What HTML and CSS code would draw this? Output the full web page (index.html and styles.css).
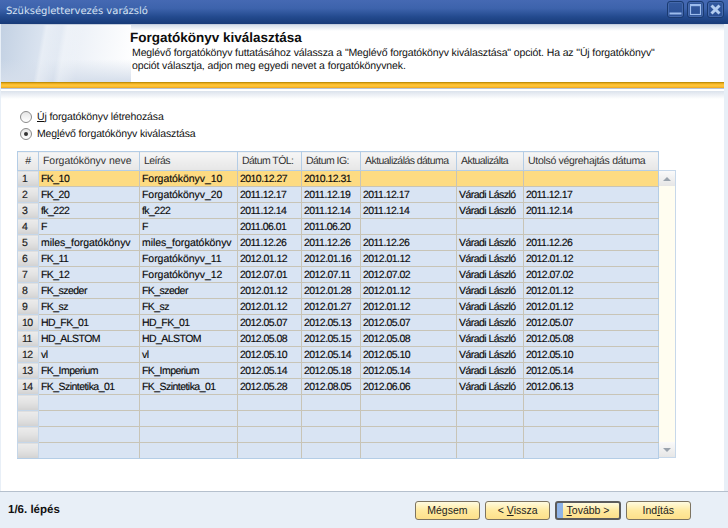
FILE: index.html
```html
<!DOCTYPE html>
<html lang="hu">
<head>
<meta charset="utf-8">
<title>Szükséglettervezés varázsló</title>
<link rel="stylesheet" href="styles.css">
</head>
<body>
<div class="window">
  <header class="titlebar">
    <span class="title">Szükséglettervezés varázsló</span>
    <div class="winbtns">
      <span class="winbtn"><svg width="15" height="15" viewBox="0 0 15 15"><rect x="1.5" y="10.5" width="12" height="2" fill="#9dbcec"/></svg></span>
      <span class="winbtn"><svg width="15" height="15" viewBox="0 0 15 15"><rect x="2.5" y="3" width="10" height="9.5" fill="none" stroke="#9dbcec" stroke-width="1.2"/><rect x="2" y="2" width="11" height="2.2" fill="#9dbcec"/></svg></span>
      <span class="winbtn"><svg width="15" height="15" viewBox="0 0 15 15"><path d="M3.5 3.5l8 8M11.5 3.5l-8 8" stroke="#b4cdf0" stroke-width="3"/></svg></span>
    </div>
  </header>
  <div class="shell">
    <div class="body">
      <section class="banner">
        <h1>Forgatókönyv kiválasztása</h1>
        <p>Meglévő forgatókönyv futtatásához válassza a "Meglévő forgatókönyv kiválasztása" opciót. Ha az "Új forgatókönyv"<br>opciót választja, adjon meg egyedi nevet a forgatókönyvnek.</p>
      </section>
      <div class="goldline"></div>
      <div class="shade"></div>
      <div class="options">
        <label class="opt"><span class="radio"></span><span><u>Ú</u>j forgatókönyv létrehozása</span></label>
        <label class="opt"><span class="radio on"></span><span>Meg<u>l</u>évő forgatókönyv kiválasztása</span></label>
      </div>
      <div class="gridwrap">
        <table class="grid">
          <colgroup>
            <col class="c0"><col class="c1"><col class="c2"><col class="c3"><col class="c4"><col class="c5"><col class="c6"><col class="c7">
          </colgroup>
          <thead>
            <tr><th class="hash">#</th><th class="wide">Forgatókönyv neve</th><th>Leírás</th><th>Dátum TÓL:</th><th>Dátum IG:</th><th>Aktualizálás dátuma</th><th>Aktualizálta</th><th class="mid">Utolsó végrehajtás dátuma</th></tr>
          </thead>
          <tbody>
            <tr class="sel"><td class="n">1</td><td>FK_10</td><td class="wide">Forgatókönyv_10</td><td>2010.12.27</td><td>2010.12.31</td><td></td><td></td><td></td></tr>
            <tr><td class="n">2</td><td>FK_20</td><td class="wide">Forgatókönyv_20</td><td>2011.12.17</td><td>2011.12.19</td><td>2011.12.17</td><td>Váradi László</td><td>2011.12.17</td></tr>
            <tr><td class="n">3</td><td>fk_222</td><td>fk_222</td><td>2011.12.14</td><td>2011.12.14</td><td>2011.12.14</td><td>Váradi László</td><td>2011.12.14</td></tr>
            <tr><td class="n">4</td><td>F</td><td>F</td><td>2011.06.01</td><td>2011.06.20</td><td></td><td></td><td></td></tr>
            <tr><td class="n">5</td><td class="wide">miles_forgatókönyv</td><td class="wide">miles_forgatókönyv</td><td>2011.12.26</td><td>2011.12.26</td><td>2011.12.26</td><td>Váradi László</td><td>2011.12.26</td></tr>
            <tr><td class="n">6</td><td>FK_11</td><td class="wide">Forgatókönyv_11</td><td>2012.01.12</td><td>2012.01.16</td><td>2012.01.12</td><td>Váradi László</td><td>2012.01.12</td></tr>
            <tr><td class="n">7</td><td>FK_12</td><td class="wide">Forgatókönyv_12</td><td>2012.07.01</td><td>2012.07.11</td><td>2012.07.02</td><td>Váradi László</td><td>2012.07.02</td></tr>
            <tr><td class="n">8</td><td>FK_szeder</td><td>FK_szeder</td><td>2012.01.12</td><td>2012.01.28</td><td>2012.01.12</td><td>Váradi László</td><td>2012.01.12</td></tr>
            <tr><td class="n">9</td><td>FK_sz</td><td>FK_sz</td><td>2012.01.12</td><td>2012.01.27</td><td>2012.01.12</td><td>Váradi László</td><td>2012.01.12</td></tr>
            <tr><td class="n">10</td><td>HD_FK_01</td><td>HD_FK_01</td><td>2012.05.07</td><td>2012.05.13</td><td>2012.05.07</td><td>Váradi László</td><td>2012.05.07</td></tr>
            <tr><td class="n">11</td><td>HD_ALSTOM</td><td>HD_ALSTOM</td><td>2012.05.08</td><td>2012.05.15</td><td>2012.05.08</td><td>Váradi László</td><td>2012.05.08</td></tr>
            <tr><td class="n">12</td><td>vl</td><td>vl</td><td>2012.05.10</td><td>2012.05.14</td><td>2012.05.10</td><td>Váradi László</td><td>2012.05.10</td></tr>
            <tr><td class="n">13</td><td>FK_Imperium</td><td>FK_Imperium</td><td>2012.05.14</td><td>2012.05.18</td><td>2012.05.14</td><td>Váradi László</td><td>2012.05.14</td></tr>
            <tr><td class="n">14</td><td>FK_Szintetika_01</td><td>FK_Szintetika_01</td><td>2012.05.28</td><td>2012.08.05</td><td>2012.06.06</td><td>Váradi László</td><td>2012.06.13</td></tr>
            <tr><td class="n"></td><td></td><td></td><td></td><td></td><td></td><td></td><td></td></tr>
            <tr><td class="n"></td><td></td><td></td><td></td><td></td><td></td><td></td><td></td></tr>
            <tr><td class="n"></td><td></td><td></td><td></td><td></td><td></td><td></td><td></td></tr>
            <tr><td class="n"></td><td></td><td></td><td></td><td></td><td></td><td></td><td></td></tr>
          </tbody>
        </table>
        <div class="scrollbar">
          <span class="sbtn"><svg width="12" height="6" viewBox="0 0 12 6"><path d="M2 5l4-4 4 4z" fill="#9aa3ad"/></svg></span>
          <span class="sbtn"><svg width="12" height="6" viewBox="0 0 12 6"><path d="M2 1l4 4 4-4z" fill="#9aa3ad"/></svg></span>
        </div>
      </div>
    </div>
    <footer class="footer">
      <span class="step">1/6. lépés</span>
      <div class="actions">
        <button class="btn">Mégsem</button>
        <button class="btn">&lt; <u>V</u>issza</button>
        <button class="btn default"><u>T</u>ovább &gt;</button>
        <button class="btn">Ind<u>í</u>tás</button>
      </div>
    </footer>
  </div>
</div>
</body>
</html>
```
FILE: styles.css
```css
* { box-sizing: border-box; }
html, body { margin: 0; height: 100%; }
body { font-family: "Liberation Sans", Arial, sans-serif; font-size: 11px; color: #111; background: #e8eff7; overflow: hidden; text-rendering: geometricPrecision; }
.window { width: 728px; height: 528px; display: flex; flex-direction: column; }
.titlebar { height: 24px; flex: none; display: flex; align-items: center; justify-content: space-between; padding: 0 4px 0 6px; background: linear-gradient(#4569b3 0%, #3d63ac 35%, #234a8e 70%, #173a78 100%); }
.title { color: #d7e3f3; font-family: "DejaVu Sans", sans-serif; font-size: 10px; margin-top: -1px; }
.winbtns { display: flex; gap: 3px; margin-top: -5px; }
.winbtn { width: 17px; height: 17px; border: 1px solid #1a3a70; border-radius: 3px; display: flex; align-items: center; justify-content: center; background: linear-gradient(#33599f, #2a4f94); box-shadow: inset 0 0 0 1px #4569ac; }
.shell { flex: 1; display: flex; flex-direction: column; }
.body { flex: none; height: 467px; margin: 0 4px 0 1px; background: #fff; border-top: 1px solid #c3cddd; display: flex; flex-direction: column; }
.banner { height: 57px; flex: none; padding: 5px 0 0 129px; background: linear-gradient(#d5deeb 0, #fff 6px, #fff 100%), #fff; position: relative; }
.banner::before { content: ""; position: absolute; inset: 0 auto 0 0; width: 130px; background: linear-gradient(100deg, transparent 30%, rgba(255,255,255,.35) 33%, transparent 44%, rgba(255,255,255,.3) 48%, transparent 60%), linear-gradient(#d5deeb00 60%, #d5deeb 100%), linear-gradient(98deg, #c3d1e3 0%, #dbe4f0 32%, #eef2f8 60%, #ffffff 100%); }
.banner h1 { position: relative; margin: 0; font-size: 13.5px; font-weight: 700; line-height: 15px; color: #0d0d0d; }
.banner p { position: relative; margin: 2px 0 0 2px; font-size: 10.5px; line-height: 13px; letter-spacing: -0.12px; color: #111; }
.goldline { height: 7px; flex: none; background: linear-gradient(#b98a06 0, #c8960a 15%, #f9b72a 30%, #ffc93c 65%, #f0a51c 100%); border-bottom: 1px solid #b6c3d4; }
.shade { height: 8px; flex: none; margin-top: 2px; background: linear-gradient(#dbe2ec, #fff); }
.options { flex: none; padding: 12px 0 0 19px; display: flex; flex-direction: column; gap: 5px; }
.opt { display: flex; align-items: center; gap: 5px; height: 12px; font-size: 10.5px; letter-spacing: -0.13px; }
.radio { width: 12px; height: 12px; border: 1px solid #8a8a8a; border-radius: 50%; background: linear-gradient(#e5e5e5, #fff); position: relative; }
.radio.on::after { content: ""; position: absolute; left: 3px; top: 3px; width: 4px; height: 4px; border-radius: 50%; background: #333; }
.gridwrap { flex: none; display: flex; align-items: flex-start; margin: 11px 0 0 16px; }
.grid { table-layout: fixed; border-collapse: collapse; width: 641px; font-size: 10.5px; letter-spacing: -0.55px; }
.grid .wide { letter-spacing: -0.05px; }
.grid .mid { letter-spacing: -0.3px; }
.c0 { width: 21px; } .c1 { width: 101px; } .c2 { width: 98px; } .c3 { width: 64px; }
.c4 { width: 59px; } .c5 { width: 96px; } .c6 { width: 67px; } .c7 { width: 135px; }
.grid th { height: 19px; padding: 0 0 0 4px; font-weight: 400; text-align: left; white-space: nowrap; color: #333; background: linear-gradient(#f6f6f6, #e6e6e6); border: 1px solid #b4cde6; }
.grid th.hash { text-align: center; padding: 0; }
.grid td { height: 16px; padding: 1px 0 0 2px; line-height: 14px; white-space: nowrap; overflow: hidden; background: #d9e4f3; border: 1px solid #c8c4b6; color: #0a0a0a; -webkit-text-stroke: 0.15px #0a0a0a; }
.grid tr td:last-child { border-right: 1px solid #b4cde6; }
.grid tbody tr:last-child td { border-bottom: 1px solid #b4cde6; }
.grid td.n { padding: 1px 0 0 4px; background: linear-gradient(#ececec 0, #e2e2e2 50%, #d2d2d2 100%); border: 1px solid #c5d6e8; color: #222; }
.grid .sel td:not(.n) { background: #fddb82; }
.scrollbar { width: 17px; height: 288px; margin-top: 19px; background: #fffdf0; border: 1px solid #c7d8ea; border-left: 0; display: flex; flex-direction: column; justify-content: space-between; }
.sbtn { height: 15px; display: flex; align-items: center; justify-content: center; background: linear-gradient(#fafafa, #e6e6e6); }
.footer { flex: 1; display: flex; align-items: center; justify-content: space-between; padding: 0 37px 0 8px; background: #e8eff7; border-top: 1px solid #b5c0cd; }
.step { font-weight: 700; font-size: 11.5px; }
.actions { display: flex; gap: 5px; }
.btn { width: 65.33px; height: 19px; padding: 0; font: inherit; font-size: 10.5px; color: #222; border: 1px solid #7d7461; border-radius: 3px; background: linear-gradient(#fffbe0 0, #ffeaa0 50%, #fde08a 100%); }
.btn.default { border: 2px solid #5c5c5c; background: linear-gradient(90deg, #8fb4e8 0, #8fb4e8 6px, transparent 6px), linear-gradient(#fffbe0 0, #ffeaa0 50%, #fde08a 100%); }
```
